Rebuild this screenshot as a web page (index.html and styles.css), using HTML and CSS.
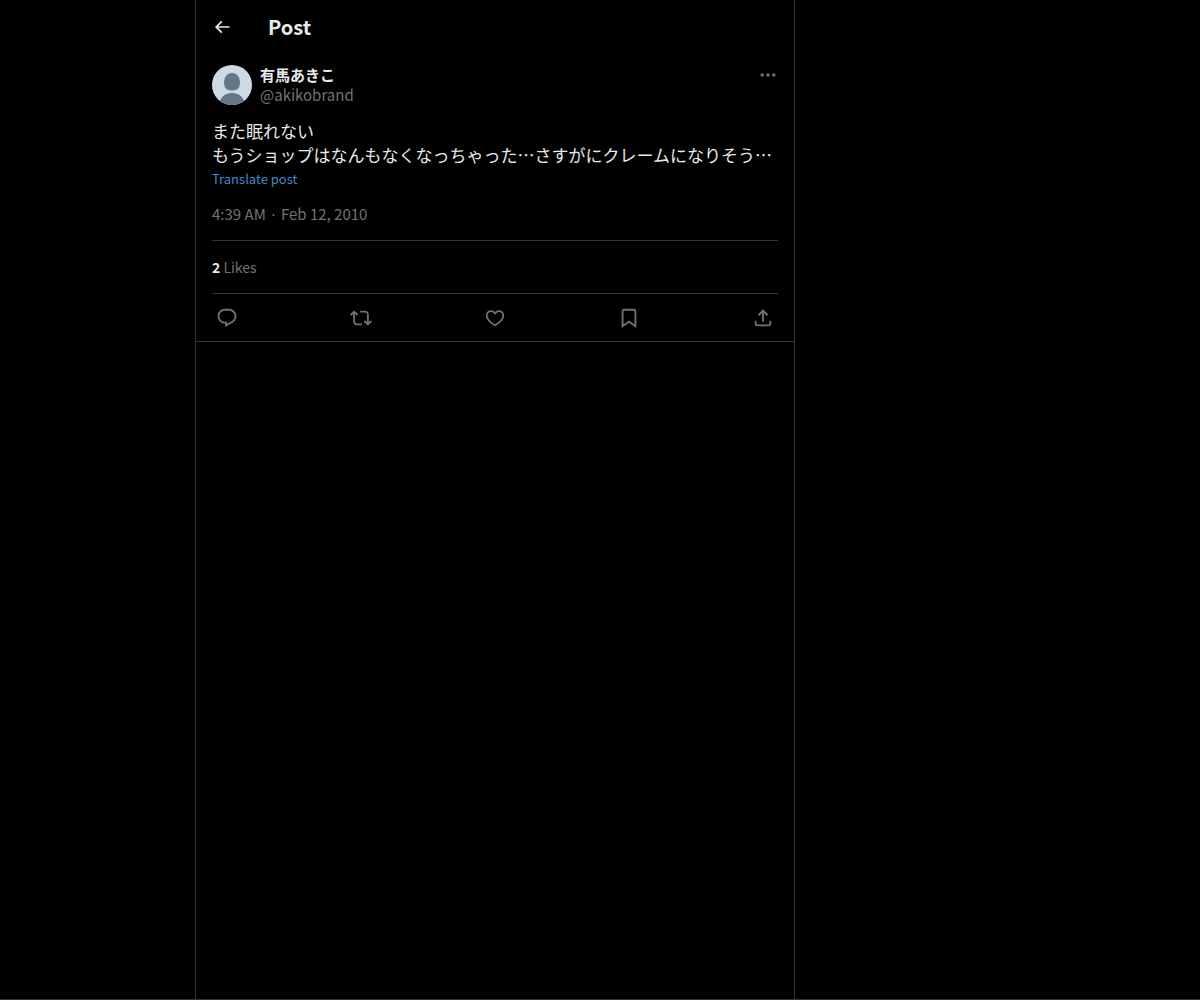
FILE: index.html
```html
<!DOCTYPE html>
<html lang="en">
<head>
  <meta charset="UTF-8">
  <meta name="viewport" content="width=device-width, initial-scale=1.0">
  <title>Post</title>
  <link rel="stylesheet" href="styles.css">
</head>
<body>
  <div class="layout">
    <main class="column">
      <header class="top-bar">
        <button type="button" class="icon-button back" aria-label="Back">
          <svg viewBox="0 0 24 24"><path d="M7.414 13l5.043 5.04-1.414 1.42L3.586 12l7.457-7.46 1.414 1.42L7.414 11H21v2H7.414z"/></svg>
        </button>
        <h1>Post</h1>
      </header>

      <article class="post">
        <div class="author">
          <svg class="avatar" viewBox="0 0 40 40" aria-hidden="true">
            <rect width="40" height="40" fill="#cfd9e2"/>
            <path d="M20 8C25 8 28 12 28 18C28 23 25 25.500 20 25.500S12 23 12 18C12 12 15 8 20 8z" fill="#657786"/>
            <path d="M7 40c1-8 6-12 13-12s12 4 13 12z" fill="#657786"/>
          </svg>
          <div class="names">
            <a href="#" class="name" lang="ja">有馬あきこ</a>
            <a href="#" class="handle">@akikobrand</a>
          </div>
          <button type="button" class="icon-button more" aria-label="More">
            <svg viewBox="0 0 24 24"><path d="M3 12c0-1.100.9-2 2-2s2 .9 2 2-.9 2-2 2-2-.9-2-2zm9 2c1.100 0 2-.9 2-2s-.9-2-2-2-2 .9-2 2 .9 2 2 2zm7 0c1.100 0 2-.9 2-2s-.9-2-2-2-2 .9-2 2 .9 2 2 2z"/></svg>
          </button>
        </div>

        <p class="text" lang="ja">また眠れない<br>もうショップはなんもなくなっちゃった…さすがにクレームになりそう…</p>
        <button type="button" class="translate">Translate post</button>

        <div class="date"><a href="#">4:39 AM · Feb 12, 2010</a></div>

        <div class="stats"><a href="#"><strong>2</strong> Likes</a></div>

        <div class="actions">
          <button type="button" class="icon-button" aria-label="Reply">
            <svg viewBox="0 0 24 24"><path d="M1.751 10c0-4.420 3.584-8 8.005-8h4.366c4.490 0 8.129 3.640 8.129 8.130 0 2.960-1.607 5.680-4.196 7.110l-8.054 4.460v-3.690h-.067c-4.490.1-8.183-3.510-8.183-8.010zm8.005-6c-3.317 0-6.005 2.690-6.005 6 0 3.370 2.770 6.080 6.138 6.010l.351-.010h1.761v2.300l5.087-2.810c1.951-1.080 3.163-3.130 3.163-5.360 0-3.390-2.744-6.130-6.129-6.130H9.756z"/></svg>
          </button>
          <button type="button" class="icon-button" aria-label="Repost">
            <svg viewBox="0 0 24 24"><path d="M4.500 3.880l4.432 4.140-1.364 1.460L5.500 7.550V16c0 1.100.896 2 2 2H13v2H7.500c-2.209 0-4-1.790-4-4V7.550L1.432 9.480.068 8.020 4.500 3.880zM16.500 6H11V4h5.500c2.209 0 4 1.790 4 4v8.450l2.068-1.930 1.364 1.460-4.432 4.140-4.432-4.140 1.364-1.460 2.068 1.930V8c0-1.100-.896-2-2-2z"/></svg>
          </button>
          <button type="button" class="icon-button" aria-label="Like">
            <svg viewBox="0 0 24 24"><path d="M16.697 5.500c-1.222-.06-2.679.51-3.890 2.160l-.805 1.090-.806-1.090C9.984 6.010 8.526 5.440 7.304 5.500c-1.243.07-2.349.78-2.910 1.910-.552 1.120-.633 2.780.479 4.820 1.074 1.970 3.257 4.270 7.129 6.610 3.870-2.340 6.052-4.640 7.126-6.610 1.111-2.040 1.030-3.700.477-4.820-.561-1.130-1.666-1.840-2.908-1.910zm4.187 7.690c-1.351 2.480-4.001 5.120-8.379 7.670l-.503.3-.504-.3c-4.379-2.550-7.029-5.190-8.382-7.670-1.360-2.500-1.410-4.860-.514-6.670.887-1.790 2.647-2.910 4.601-3.010 1.651-.09 3.368.56 4.798 2.010 1.429-1.450 3.146-2.100 4.796-2.010 1.954.1 3.714 1.220 4.601 3.010.896 1.810.846 4.170-.514 6.670z"/></svg>
          </button>
          <button type="button" class="icon-button" aria-label="Bookmark">
            <svg viewBox="0 0 24 24"><path d="M4 4.500C4 3.120 5.119 2 6.500 2h11C18.881 2 20 3.120 20 4.500v18.440l-8-5.710-8 5.710V4.500zM6.500 4c-.276 0-.5.22-.5.5v14.560l6-4.290 6 4.290V4.500c0-.28-.224-.5-.5-.5h-11z"/></svg>
          </button>
          <button type="button" class="icon-button" aria-label="Share">
            <svg viewBox="0 0 24 24"><path d="M12 2.590l5.700 5.700-1.410 1.420L13 6.410V16h-2V6.410l-3.300 3.300-1.410-1.420L12 2.590zM21 15l-.02 3.510c0 1.380-1.120 2.490-2.500 2.490H5.500C4.110 21 3 19.880 3 18.500V15h2v3.500c0 .28.22.5.5.5h12.980c.28 0 .5-.22.5-.5L19 15h2z"/></svg>
          </button>
        </div>
      </article>
    </main>
  </div>
</body>
</html>
```
FILE: styles.css
```css
* {
  box-sizing: border-box;
}
body {
  margin: 0;
  background: #000;
  color: #e7e9ea;
  font-family: "Noto Sans CJK JP", "Noto Sans", sans-serif;
  font-size: 15px;
  line-height: 20px;
}
a {
  color: inherit;
  text-decoration: none;
}
a:hover {
  text-decoration: underline;
}
button {
  padding: 0;
  border: none;
  background: none;
  color: inherit;
  font: inherit;
  cursor: pointer;
}
.layout {
  display: grid;
  grid-template-columns: 13fr 40fr 27fr;
  min-height: 100vh;
  border-bottom: 1px solid #353535;
}
.column {
  grid-column: 2;
  border-left: 1px solid #353535;
  border-right: 1px solid #353535;
}
.top-bar {
  display: flex;
  align-items: center;
  height: 53px;
  padding: 0 16px;
}
h1 {
  margin: 0;
  font-size: 20px;
  line-height: 24px;
}
.icon-button {
  display: flex;
  align-items: center;
  justify-content: center;
}
.icon-button svg {
  width: 20px;
  height: 20px;
  fill: currentColor;
}
.back {
  margin-right: 36px;
}
.post {
  padding: 12px 16px 0;
  border-bottom: 1px solid #353535;
}
.author {
  display: flex;
  align-items: flex-start;
  gap: 8px;
}
.avatar {
  width: 40px;
  height: 40px;
  border-radius: 50%;
}
.names {
  display: flex;
  flex: 1;
  flex-direction: column;
  align-items: flex-start;
}
.name {
  font-weight: bold;
}
.handle,
.more,
.date,
.stats,
.actions {
  color: #707274;
}
.text {
  margin: 14px 0 4px;
  font-size: 17px;
  line-height: 24px;
}
.translate {
  display: block;
  color: #428bcc;
  font-size: 13px;
  line-height: 16px;
}
.date {
  padding: 17px 0 16px;
}
.stats {
  padding: 16px 0;
  border-top: 1px solid #353535;
  border-bottom: 1px solid #353535;
  font-size: 14px;
}
.stats strong {
  color: #e7e9ea;
}
.actions {
  display: flex;
  align-items: center;
  justify-content: space-between;
  height: 47px;
}
.actions .icon-button {
  width: 30px;
}
.actions svg {
  width: 22px;
  height: 22px;
}
```
